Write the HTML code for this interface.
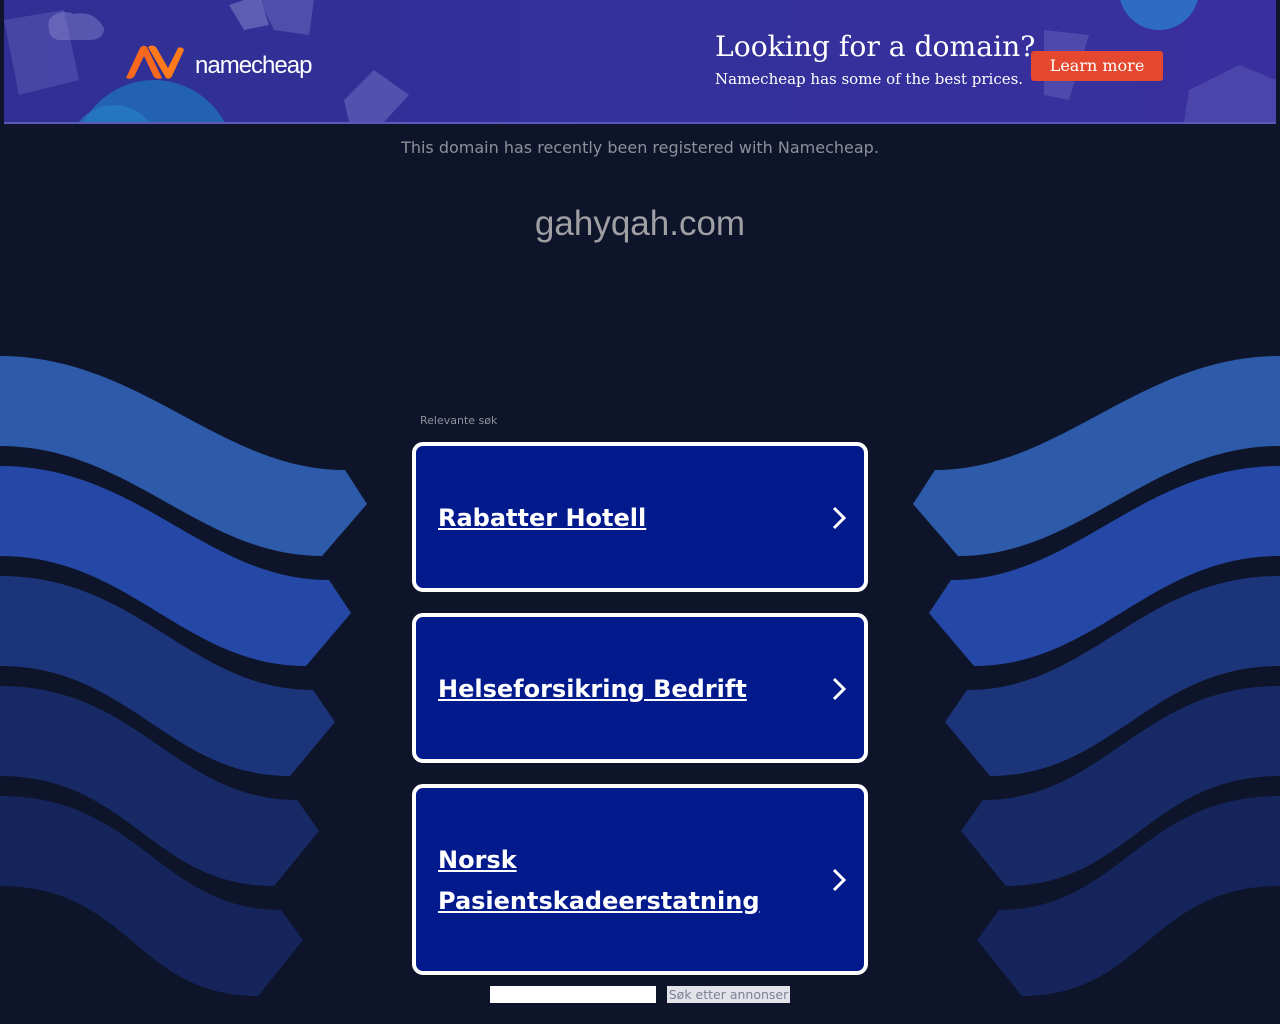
<!DOCTYPE html>
<html><head><meta charset="utf-8">
<style>
html,body{margin:0;padding:0;}
body{width:1280px;height:1024px;background:#0e152b;position:relative;overflow:hidden;font-family:"DejaVu Sans","Liberation Sans",sans-serif;}
.banner{position:absolute;left:4px;top:0;width:1272px;height:122px;background:linear-gradient(90deg,#302f93 0%,#33319a 50%,#3a2f9e 100%);border-bottom:2px solid #5a58b8;overflow:hidden;}
.t1{position:absolute;left:711px;top:30px;font-family:"DejaVu Serif","Liberation Serif",serif;font-size:28.2px;color:#fff;white-space:nowrap;}
.t2{position:absolute;left:711px;top:70px;font-family:"DejaVu Serif","Liberation Serif",serif;font-size:15px;color:#fff;white-space:nowrap;}
.btn{position:absolute;left:1027px;top:51px;width:132px;height:30px;background:#e4482f;border-radius:3px;color:#fff;font-family:"DejaVu Serif","Liberation Serif",serif;font-size:16px;text-align:center;line-height:29px;}
.logo{position:absolute;left:191px;top:52px;color:#fff;font-family:"Liberation Sans",sans-serif;font-size:24px;letter-spacing:-1px;}
.reg{position:absolute;top:138px;width:100%;text-align:center;color:#8d909a;font-size:16px;}
.dom{position:absolute;top:204px;width:100%;text-align:center;color:#a0a0a4;font-family:"Liberation Sans",sans-serif;font-size:35px;}
.rel{position:absolute;left:420px;top:414px;color:#8d909a;font-size:11px;}
.card{position:absolute;left:412px;width:448px;background:#031a8c;border:4px solid #fff;border-radius:11px;}
.card a{position:absolute;left:22px;color:#fff;font-weight:bold;font-size:24px;text-decoration:underline;line-height:41px;}
.card svg{position:absolute;left:415px;}
.inp{position:absolute;left:490px;top:986px;width:166px;height:17px;background:#fff;}
.sb{position:absolute;left:667px;top:986px;width:123px;height:17px;background:#e2e4ea;color:#7b8194;font-size:12.5px;line-height:17px;text-align:center;}
</style></head><body>
<div class="banner">
<svg width="1272" height="122" style="position:absolute;left:0;top:0">
<circle cx="150" cy="160" r="80" fill="#1f6fb8" opacity="0.8"/>
<circle cx="110" cy="150" r="45" fill="#2a83c8" opacity="0.6"/>
<circle cx="1155" cy="-10" r="40" fill="#2a7ccc" opacity="0.8"/>
<path d="M0 20 L60 10 L75 80 L15 95 Z" fill="#6b6ac0" opacity="0.4"/>
<path d="M45 20 Q55 8 70 14 Q90 10 100 28 Q100 40 85 40 L55 40 Q42 38 45 20Z" fill="#8a8ad0" opacity="0.45"/>
<path d="M225 5 L255 -5 L265 25 L240 30 Z" fill="#8a8ad0" opacity="0.5"/>
<path d="M255 0 L310 0 L305 35 L270 30 Z" fill="#7c7cca" opacity="0.4"/>
<path d="M340 100 L370 70 L405 95 L380 122 L345 122 Z" fill="#7a7ac8" opacity="0.45"/>
<path d="M1040 30 L1085 35 L1065 100 L1040 95 Z" fill="#7070c0" opacity="0.4"/>
<path d="M1185 90 L1235 65 L1272 80 L1272 122 L1180 122 Z" fill="#6e6ec0" opacity="0.35"/>
</svg>
<svg width="64" height="36" viewBox="0 0 64 36" style="position:absolute;left:118px;top:44px">
<path d="M4 34 L18 4 Q21 0 25 3 L40 34 Q36 36 32 33 L22 12 L12 33 Q8 36 4 34Z" fill="#f7671e"/>
<path d="M26 3 L44 34 Q48 36 50 32 L62 6 Q60 2 56 4 L46 24 L34 3 Q30 0 26 3Z" fill="#ff7a1a"/>
</svg>
<div class="logo">namecheap</div>
<div class="t1">Looking for a domain?</div>
<div class="t2">Namecheap has some of the best prices.</div>
<div class="btn">Learn more</div>
</div>
<div class="reg">This domain has recently been registered with Namecheap.</div>
<div class="dom">gahyqah.com</div>
<svg width="1280" height="1024" style="position:absolute;left:0;top:0">
<g id="left">
<path d="M0 356 C140 356 220 470 345 470 L367 504 L322 556 C200 556 130 446 0 446 Z" fill="#2d5aa9"/>
<path d="M0 466 C140 466 205 580 329 580 L351 613 L306 666 C184 666 130 556 0 556 Z" fill="#2547a5"/>
<path d="M0 576 C140 576 190 690 313 690 L335 722 L290 776 C168 776 130 666 0 666 Z" fill="#1c3479"/>
<path d="M0 686 C140 686 175 800 297 800 L319 831 L274 886 C152 886 130 776 0 776 Z" fill="#182a66"/>
<path d="M0 796 C140 796 160 910 281 910 L303 940 L258 996 C136 996 130 886 0 886 Z" fill="#15245b"/>
</g>
<g transform="translate(1280,0) scale(-1,1)">
<path d="M0 356 C140 356 220 470 345 470 L367 504 L322 556 C200 556 130 446 0 446 Z" fill="#2d5aa9"/>
<path d="M0 466 C140 466 205 580 329 580 L351 613 L306 666 C184 666 130 556 0 556 Z" fill="#2547a5"/>
<path d="M0 576 C140 576 190 690 313 690 L335 722 L290 776 C168 776 130 666 0 666 Z" fill="#1c3479"/>
<path d="M0 686 C140 686 175 800 297 800 L319 831 L274 886 C152 886 130 776 0 776 Z" fill="#182a66"/>
<path d="M0 796 C140 796 160 910 281 910 L303 940 L258 996 C136 996 130 886 0 886 Z" fill="#15245b"/>
</g>
</svg>
<div class="rel">Relevante søk</div>
<div class="card" style="top:442px;height:142px;"><a style="top:52px">Rabatter Hotell</a><svg style="top:59px" width="16" height="26"><path d="M3 3 L13 13 L3 23" stroke="#fff" stroke-width="3" fill="none"/></svg></div>
<div class="card" style="top:613px;height:142px;"><a style="top:52px">Helseforsikring Bedrift</a><svg style="top:59px" width="16" height="26"><path d="M3 3 L13 13 L3 23" stroke="#fff" stroke-width="3" fill="none"/></svg></div>
<div class="card" style="top:784px;height:183px;"><a style="top:52px">Norsk<br>Pasientskadeerstatning</a><svg style="top:79px" width="16" height="26"><path d="M3 3 L13 13 L3 23" stroke="#fff" stroke-width="3" fill="none"/></svg></div>
<div class="inp"></div>
<div class="sb">Søk etter annonser</div>
</body></html>
